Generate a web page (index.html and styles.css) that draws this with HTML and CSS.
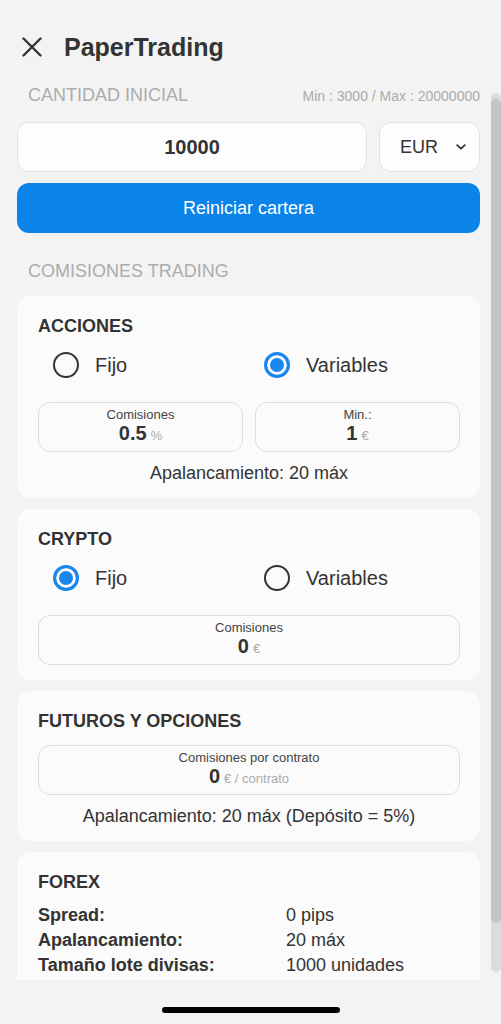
FILE: index.html
```html
<!DOCTYPE html>
<html lang="es">
<head>
    <meta charset="UTF-8" />
    <title>PaperTrading</title>
    <link rel="stylesheet" href="styles.css">
</head>
<body>
<div class="screen">
    <header class="topbar">
        <svg class="close-icon" width="20" height="20" viewBox="0 0 20 20">
            <path d="M1.5 1.5 L18.5 18.5 M18.5 1.5 L1.5 18.5" stroke="#333" stroke-width="2.4" stroke-linecap="round" fill="none"/>
        </svg>
        <h1>PaperTrading</h1>
    </header>

    <main class="scroll">
        <div class="section-head">
            <span class="section-title">CANTIDAD INICIAL</span>
            <span class="limits">Min : 3000 / Max : 20000000</span>
        </div>
        <div class="amount-row">
            <div class="amount-input">10000</div>
            <div class="currency">
                <span>EUR</span>
                <svg width="10" height="6" viewBox="0 0 10 6">
                    <path d="M1.2 1.2 L5 4.6 L8.8 1.2" stroke="#333" stroke-width="1.8" stroke-linecap="round" stroke-linejoin="round" fill="none"/>
                </svg>
            </div>
        </div>
        <button class="reset-btn">Reiniciar cartera</button>

        <div class="section-head spaced">
            <span class="section-title">COMISIONES TRADING</span>
        </div>

        <section class="card">
            <h2>ACCIONES</h2>
            <div class="radio-row">
                <label class="radio-option"><span class="radio"></span>Fijo</label>
                <label class="radio-option"><span class="radio checked"></span>Variables</label>
            </div>
            <div class="fee-row">
                <div class="fee-box">
                    <span class="fee-label">Comisiones</span>
                    <span class="fee-value">0.5<small>%</small></span>
                </div>
                <div class="fee-box">
                    <span class="fee-label">Min.:</span>
                    <span class="fee-value">1<small>€</small></span>
                </div>
            </div>
            <p class="note">Apalancamiento: 20 máx</p>
        </section>

        <section class="card">
            <h2>CRYPTO</h2>
            <div class="radio-row">
                <label class="radio-option"><span class="radio checked"></span>Fijo</label>
                <label class="radio-option"><span class="radio"></span>Variables</label>
            </div>
            <div class="fee-row">
                <div class="fee-box">
                    <span class="fee-label">Comisiones</span>
                    <span class="fee-value">0<small>€</small></span>
                </div>
            </div>
        </section>

        <section class="card">
            <h2>FUTUROS Y OPCIONES</h2>
            <div class="fee-row tight">
                <div class="fee-box">
                    <span class="fee-label">Comisiones por contrato</span>
                    <span class="fee-value">0<small>€ / contrato</small></span>
                </div>
            </div>
            <p class="note">Apalancamiento: 20 máx (Depósito = 5%)</p>
        </section>

        <section class="card">
            <h2>FOREX</h2>
            <dl class="specs">
                <dt>Spread:</dt><dd>0 pips</dd>
                <dt>Apalancamiento:</dt><dd>20 máx</dd>
                <dt>Tamaño lote divisas:</dt><dd>1000 unidades</dd>
            </dl>
        </section>
    </main>

    <div class="scrollbar"><div class="thumb"></div></div>

    <footer class="home-bar"><span class="home-indicator"></span></footer>
</div>
</body>
</html>
```

FILE: styles.css
```css
html, body {
    margin: 0;
    height: 1024px;
    overflow: hidden;
}
body {
    font-family: "Liberation Sans", Arial, sans-serif;
    background-color: #f3f3f3;
    color: #333;
}
.screen {
    position: relative;
    display: flex;
    flex-direction: column;
    height: 1024px;
}

/* header */
.topbar {
    display: flex;
    align-items: center;
    height: 38px;
    padding: 28px 0 10px 22px;
}
.close-icon {
    flex: none;
}
.topbar h1 {
    margin: 0 0 0 22px;
    font-size: 25px;
    line-height: 38px;
    font-weight: bold;
    color: #333;
}

/* scrolling content */
.scroll {
    height: 904px;
    overflow: hidden;
    padding: 8px 21px 0 17px;
    box-sizing: border-box;
}
.section-head {
    display: flex;
    justify-content: space-between;
    align-items: baseline;
    padding-left: 11px;
    line-height: 22px;
}
.section-head.spaced {
    margin-top: 27px;
}
.section-title {
    font-size: 18px;
    color: #acacac;
}
.limits {
    font-size: 14px;
    color: #ababab;
}

.amount-row {
    display: flex;
    gap: 12px;
    margin-top: 15px;
}
.amount-input,
.currency {
    height: 50px;
    box-sizing: border-box;
    border: 1px solid #e2e2e2;
    border-radius: 12px;
    background-color: #fdfdfd;
    display: flex;
    align-items: center;
}
.amount-input {
    flex: 1;
    justify-content: center;
    font-size: 20px;
    font-weight: bold;
}
.currency {
    width: 101px;
    padding-left: 20px;
    gap: 18px;
    font-size: 18px;
}

.reset-btn {
    display: block;
    width: 100%;
    height: 50px;
    margin-top: 11px;
    border: none;
    border-radius: 12px;
    background-color: #0b84ea;
    color: #fff;
    font-family: inherit;
    font-size: 18px;
}

/* cards */
.card {
    background-color: #fbfbfb;
    border-radius: 14px;
    padding: 19px 20px 15px 21px;
    margin-top: 11px;
}
.section-head + .card {
    margin-top: 14px;
}
.card h2 {
    margin: 0;
    font-size: 18px;
    line-height: 22px;
    font-weight: bold;
    color: #333;
}
.radio-row {
    display: grid;
    grid-template-columns: 1fr 1fr;
    margin-top: 10px;
    height: 36px;
}
.radio-option {
    display: flex;
    align-items: center;
    gap: 16px;
    padding-left: 15px;
    font-size: 20px;
    color: #333;
}
.radio {
    width: 26px;
    height: 26px;
    box-sizing: border-box;
    border: 2.5px solid #333;
    border-radius: 50%;
}
.radio.checked {
    border: 3px solid #1a87ee;
    background-color: #1a87ee;
    box-shadow: inset 0 0 0 3px #fbfbfb;
}

.fee-row {
    display: flex;
    gap: 12px;
    margin-top: 19px;
}
.fee-row.tight {
    margin-top: 13px;
}
.fee-box {
    flex: 1;
    height: 50px;
    box-sizing: border-box;
    border: 1px solid #dedede;
    border-radius: 12px;
    display: flex;
    flex-direction: column;
    align-items: center;
    justify-content: center;
}
.fee-label {
    font-size: 13px;
    line-height: 15px;
    color: #444;
}
.fee-value {
    font-size: 20px;
    line-height: 22px;
    font-weight: bold;
    color: #333;
}
.fee-value small {
    font-size: 13px;
    font-weight: normal;
    color: #aaa;
    margin-left: 4px;
}
.note {
    margin: 11px 0 0;
    text-align: center;
    font-size: 18px;
    line-height: 20px;
    color: #333;
}

.specs {
    display: grid;
    grid-template-columns: 248px 1fr;
    margin: 10px 0 0;
    font-size: 18px;
    line-height: 25px;
}
.specs dt {
    font-weight: bold;
}
.specs dd {
    margin: 0;
}

/* overlay scrollbar */
.scrollbar {
    position: absolute;
    left: 491px;
    top: 93px;
    width: 10px;
    height: 879px;
    border-radius: 5px;
    background-color: #dcdcdc;
}
.thumb {
    margin-top: 6px;
    height: 824px;
    border-radius: 5px;
    background-color: #c4c4c4;
}

/* bottom */
.home-bar {
    flex: 1;
    display: flex;
    justify-content: center;
    padding-top: 27px;
}
.home-indicator {
    width: 178px;
    height: 6px;
    border-radius: 3px;
    background-color: #000;
}
```
